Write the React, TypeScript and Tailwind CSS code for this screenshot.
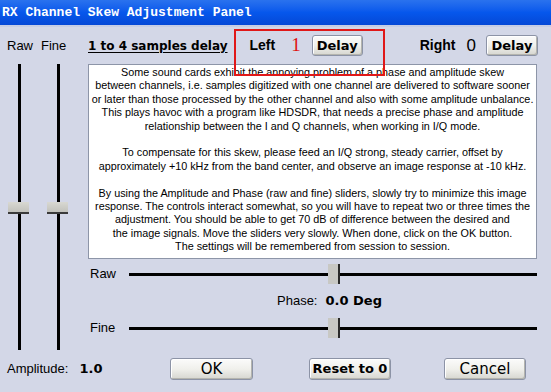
import React from "react";

const sans = { fontFamily: '"Liberation Sans", Arial, sans-serif' };
const dv = { fontFamily: '"DejaVu Sans", Verdana, sans-serif' };

const XpButton = ({
  children,
  className = "",
}: {
  children: React.ReactNode;
  className?: string;
}) => (
  <button
    className={`flex shrink-0 items-center justify-center whitespace-nowrap rounded-[3px] border border-[#8c93a6] bg-gradient-to-b from-[#fbfbfb] via-[#f0f0ec] to-[#d6d6d0] shadow-[inset_-1px_-1px_0_#b4b4ae,inset_1px_1px_0_#ffffff] text-black ${className}`}
  >
    {children}
  </button>
);

const VSlider = () => (
  <div className="relative flex h-[286px] w-[22px] shrink-0 justify-center">
    <div className="h-full w-[3px] bg-black" />
    <div className="absolute left-0 top-[138px] h-[12px] w-[21px] border-b-2 border-[#3a3a3a] bg-gradient-to-b from-[#d8d8d2] to-[#c2c2bc]" />
  </div>
);

const HSlider = () => (
  <div className="relative flex h-[20px] w-[408px] shrink-0 items-center">
    <div className="h-[3px] w-full bg-black" />
    <div className="absolute left-[199px] top-0 h-[20px] w-[12px] border-r-2 border-[#2a2a2a] bg-[#c8c8c4]" />
  </div>
);

const lines1 = [
  "Some sound cards exhibit the annoying problem of a phase and amplitude skew",
  "between channels, i.e. samples digitized with one channel are delivered to software sooner",
  "or later than those processed by the other channel and also with some amplitude unbalance.",
  "This plays havoc with a program like HDSDR, that needs a precise phase and amplitude",
  "relationship between the I and Q channels, when working in I/Q mode.",
];
const lines2 = [
  "To compensate for this skew, please feed an I/Q strong, steady carrier, offset by",
  "approximately +10 kHz from the band center, and observe an image response at -10 kHz.",
];
const lines3 = [
  "By using the Amplitude and Phase (raw and fine) sliders, slowly try to minimize this image",
  "response. The controls interact somewhat, so you will have to repeat two or three times the",
  "adjustment. You should be able to get 70 dB of difference between the desired and",
  "the image signals. Move the sliders very slowly. When done, click on the OK button.",
  "The settings will be remembered from session to session.",
];

export default function App() {
  return (
    <div className="relative h-[392px] w-[551px] overflow-hidden bg-[#d3d7e7]" style={sans}>
      {/* Title bar */}
      <div className="flex h-[25px] items-center bg-gradient-to-b from-[#2a72ee] via-[#0657ec] to-[#0548d6] pl-[2px]">
        <span
          className="whitespace-nowrap text-[13px] font-bold text-white"
          style={{ fontFamily: '"Liberation Mono", "Courier New", monospace' }}
        >
          RX Channel Skew Adjustment Panel
        </span>
      </div>
      <div className="h-[2px] bg-[#c6cde4]" />

      {/* Main */}
      <div className="flex">
        {/* Left column: amplitude sliders */}
        <div className="flex w-[88px] shrink-0 flex-col">
          <div className="flex h-[37px] items-center gap-[8px] pl-[7px] text-[13px]">
            <span>Raw</span>
            <span>Fine</span>
          </div>
          <div className="flex gap-[17px] pl-[8px]">
            <VSlider />
            <VSlider />
          </div>
        </div>

        {/* Right column */}
        <div className="flex w-[449px] shrink-0 flex-col">
          <div className="flex h-[37px] items-center whitespace-nowrap">
            <span className="text-[12px] font-bold underline underline-offset-2" style={dv}>
              1 to 4 samples delay
            </span>
            <span className="ml-[22px] text-[14px] font-bold">Left</span>
            <span
              className="ml-[16px] text-[19px] text-[#e01010]"
              style={{ fontFamily: '"Liberation Serif", serif' }}
            >
              1
            </span>
            <XpButton className="ml-[11px] h-[21px] w-[51px] text-[13px] font-bold">
              <span style={dv}>Delay</span>
            </XpButton>
            <span className="ml-[57px] text-[14px] font-bold">Right</span>
            <span className="ml-[11px] text-[17px]">0</span>
            <XpButton className="ml-[10px] h-[21px] w-[52px] text-[13px] font-bold">
              <span style={dv}>Delay</span>
            </XpButton>
          </div>

          <div className="h-[195px] overflow-hidden whitespace-nowrap border border-[#8d95a8] bg-white pt-[1px] text-center text-[10.8px] leading-[13.4px]">
            {lines1.map((l) => (
              <div key={l}>{l}</div>
            ))}
            <div className="h-[13.4px]" />
            {lines2.map((l) => (
              <div key={l}>{l}</div>
            ))}
            <div className="h-[13.4px]" />
            {lines3.map((l) => (
              <div key={l}>{l}</div>
            ))}
          </div>

          <div className="mt-[5px] flex items-center text-[13px]">
            <span className="w-[41px] shrink-0 pl-[2px]">Raw</span>
            <HSlider />
          </div>
          <div className="flex h-[34px] items-center whitespace-nowrap pl-[189px] text-[13px]">
            <span>Phase:</span>
            <span className="ml-[8px] font-bold" style={dv}>
              0.0 Deg
            </span>
          </div>
          <div className="flex items-center text-[13px]">
            <span className="w-[41px] shrink-0 pl-[2px]">Fine</span>
            <HSlider />
          </div>
        </div>
      </div>

      {/* Bottom row */}
      <div className="mt-[8px] flex items-center whitespace-nowrap">
        <div className="flex w-[170px] shrink-0 items-center pl-[7px] text-[13px]">
          <span>Amplitude:</span>
          <span className="ml-[11px] font-bold" style={dv}>
            1.0
          </span>
        </div>
        <XpButton className="h-[22px] w-[83px] text-[15px]">
          <span style={dv}>OK</span>
        </XpButton>
        <XpButton className="ml-[56px] h-[22px] w-[82px] text-[13px] font-bold">
          <span style={dv}>Reset to 0</span>
        </XpButton>
        <XpButton className="ml-[53px] h-[22px] w-[82px] text-[15px]">
          <span style={dv}>Cancel</span>
        </XpButton>
      </div>

      {/* Red highlight annotation */}
      <div className="absolute left-[234px] top-[29px] h-[47px] w-[151px] border-2 border-[#e01818]" />
    </div>
  );
}
